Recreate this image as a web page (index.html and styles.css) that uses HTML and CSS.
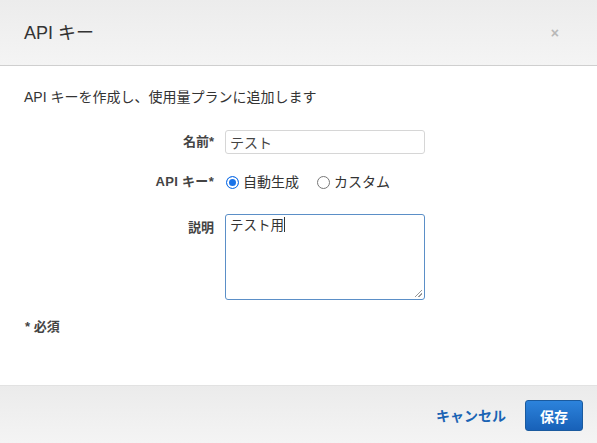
FILE: index.html
```html
<!DOCTYPE html>
<html lang="ja">
<head>
<meta charset="utf-8">
<link rel="stylesheet" href="styles.css">
</head>
<body>
<div class="modal">
  <div class="modal-header">
    <h1 class="modal-title">API キー</h1>
    <span class="close">×</span>
  </div>
  <div class="modal-body">
    <p class="intro">API キーを作成し、使用量プランに追加します</p>
    <div class="form">
      <label class="label row-name">名前*</label>
      <input class="field row-name" type="text" value="テスト">
      <label class="label row-key">API キー*</label>
      <div class="radios row-key">
        <span class="radio-opt"><span class="radio checked"></span>自動生成</span>
        <span class="radio-opt"><span class="radio"></span>カスタム</span>
      </div>
      <label class="label row-desc">説明</label>
      <div class="area row-desc">テスト用<span class="caret"></span><span class="grip"></span></div>
    </div>
    <p class="required">* 必須</p>
  </div>
  <div class="modal-footer">
    <span class="cancel">キャンセル</span>
    <span class="save">保存</span>
  </div>
</div>
</body>
</html>
```
FILE: styles.css
```css
html, body {
  margin: 0;
  padding: 0;
  background: #fff;
}
body {
  font-family: "Liberation Sans", "Noto Sans CJK JP", sans-serif;
  color: #444;
  font-size: 13px;
}
.modal {
  width: 597px;
  height: 443px;
  display: flex;
  flex-direction: column;
  overflow: hidden;
}
.modal-header {
  height: 65px;
  border-bottom: 1px solid #cfcfcf;
  background: linear-gradient(#ececec, #f4f4f4);
  display: flex;
  align-items: center;
  justify-content: space-between;
  padding: 0 38px 0 24px;
}
.modal-title {
  margin: 0;
  font-size: 18px;
  font-weight: normal;
  color: #333;
  position: relative;
  top: -2px;
}
.close {
  color: #b8b8b8;
  font-size: 14px;
  font-weight: bold;
}
.modal-body {
  flex: 1;
  padding: 22px 24px 0 24px;
}
.intro {
  margin: 0;
  font-size: 14px;
  line-height: 18px;
  color: #333;
}
.form {
  display: grid;
  grid-template-columns: 190px 200px;
  column-gap: 11px;
  margin-top: 24px;
}
.label {
  font-weight: bold;
  text-align: right;
  color: #444;
}
.label.row-name {
  line-height: 24px;
}
.field {
  box-sizing: border-box;
  height: 24px;
  border: 1px solid #d6d6d6;
  border-radius: 3px;
  padding: 0 4px;
  font: inherit;
  font-size: 14px;
  color: #444;
  outline: none;
}
.label.row-key {
  margin-top: 19px;
  line-height: 18px;
  letter-spacing: 0.3px;
}
.radios {
  margin-top: 19px;
  display: flex;
  gap: 18px;
  font-size: 14px;
  line-height: 18px;
  padding-left: 1px;
  color: #333;
}
.radio-opt {
  display: flex;
  align-items: center;
  gap: 4px;
}
.radio {
  box-sizing: border-box;
  width: 13px;
  height: 13px;
  border-radius: 50%;
  border: 1px solid #777;
  background: #fff;
}
.radio.checked {
  border: 1px solid #1a73e8;
  box-shadow: inset 0 0 0 2px #fff;
  background: #1a73e8;
}
.label.row-desc {
  margin-top: 23px;
  padding-top: 5px;
  line-height: 18px;
}
.area {
  margin-top: 23px;
  position: relative;
  box-sizing: border-box;
  height: 86px;
  border: 1px solid #5b8fc7;
  border-radius: 3px;
  padding: 2px 4px;
  font-size: 13.5px;
  line-height: 18px;
  color: #333;
}
.caret {
  display: inline-block;
  width: 1px;
  height: 15px;
  background: #333;
  vertical-align: -2px;
}
.grip {
  position: absolute;
  right: 2px;
  bottom: 2px;
  width: 7px;
  height: 7px;
  background: linear-gradient(135deg, transparent 45%, #999 45%, #999 55%, transparent 55%, transparent 70%, #999 70%, #999 80%, transparent 80%);
}
.required {
  margin: 18px 0 0 1px;
  font-weight: bold;
  line-height: 18px;
  color: #444;
}
.modal-footer {
  height: 57px;
  border-top: 1px solid #e2e2e2;
  background: linear-gradient(#ebebeb, #f4f4f4);
  display: flex;
  align-items: center;
  justify-content: flex-end;
  gap: 19px;
  padding: 0 14px 0 0;
}
.cancel {
  color: #1a64b4;
  font-weight: bold;
  font-size: 14px;
}
.save {
  box-sizing: border-box;
  width: 58px;
  height: 31px;
  border: 1px solid #1a5a9e;
  border-radius: 3px;
  background: linear-gradient(#2c83dc, #1861b8);
  color: #fff;
  font-weight: bold;
  font-size: 14px;
  display: flex;
  align-items: center;
  justify-content: center;
  position: relative;
  top: 1px;
}
```
